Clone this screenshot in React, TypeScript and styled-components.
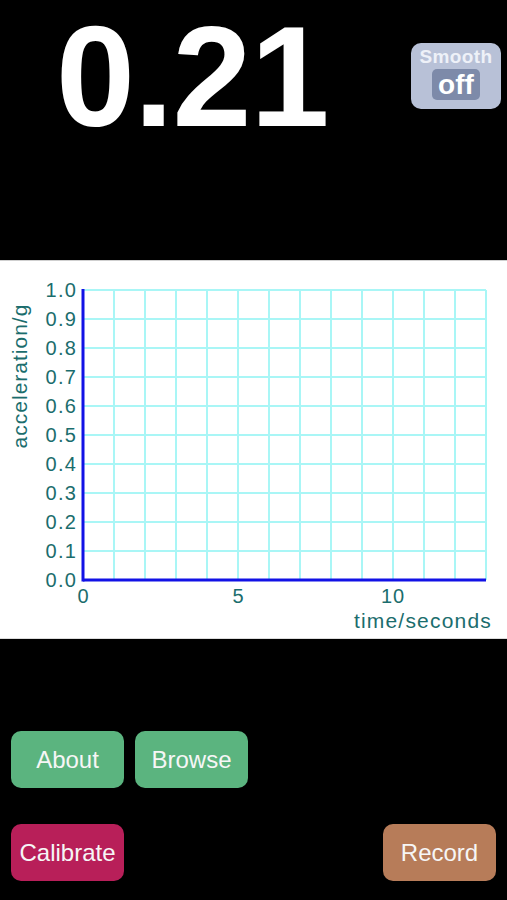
import styled, { createGlobalStyle } from "styled-components";

const GlobalStyle = createGlobalStyle`
  html, body {
    margin: 0;
    padding: 0;
    background: #000;
  }
  body {
    font-family: "Liberation Sans", Arial, sans-serif;
  }
`;

const Screen = styled.div`
  width: 507px;
  height: 900px;
  background: #000;
  display: flex;
  flex-direction: column;
  overflow: hidden;
`;

const Header = styled.div`
  height: 260px;
  display: flex;
  justify-content: space-between;
  align-items: flex-start;
  padding: 0 6px 0 56px;
  box-sizing: border-box;
`;

const Reading = styled.div`
  color: #fff;
  font-size: 142px;
  font-weight: 700;
  line-height: 154px;
  letter-spacing: -1px;
`;

const SmoothToggle = styled.button`
  margin-top: 43px;
  width: 90px;
  height: 66px;
  border: none;
  border-radius: 10px;
  background: #b8c1d7;
  display: flex;
  flex-direction: column;
  align-items: center;
  padding: 3px 0 0;
  box-sizing: border-box;
  font-family: "Liberation Sans", Arial, sans-serif;
  cursor: pointer;
`;

const SmoothLabel = styled.span`
  color: #eef1f8;
  font-size: 19px;
  font-weight: 700;
  line-height: 21px;
  letter-spacing: 0.4px;
`;

const StateBox = styled.span`
  margin-top: 2px;
  width: 48px;
  height: 31px;
  border-radius: 5px;
  background: #7d8aa9;
  color: #fff;
  font-size: 28px;
  font-weight: 700;
  line-height: 31px;
  text-align: center;
`;

const ChartPanel = styled.div`
  height: 379px;
  background: #fff;
  border-top: 1px solid #cfcfcf;
  border-bottom: 1px solid #dcdcdc;
  box-sizing: border-box;
`;

const Controls = styled.div`
  flex: 1;
  display: flex;
  flex-direction: column;
  gap: 36px;
  padding: 92px 11px 0;
`;

const ButtonRow = styled.div<{ $spread?: boolean }>`
  display: flex;
  gap: 11px;
  justify-content: ${(p) => (p.$spread ? "space-between" : "flex-start")};
`;

const ActionButton = styled.button<{ $tone: string }>`
  width: 113px;
  height: 57px;
  border: none;
  border-radius: 10px;
  background: ${(p) => p.$tone};
  color: #f6f6f6;
  font-family: "Liberation Sans", Arial, sans-serif;
  font-size: 24px;
  padding: 0;
  cursor: pointer;
`;

const TEAL = "#1b6d6d";
const GRID = "#a9f6f6";
const X0 = 83;
const X_STEP = 31;
const Y_TOP = 30;
const Y_STEP = 29;
const Y_AXIS = Y_TOP + Y_STEP * 10;
const X_END = X0 + X_STEP * 13;

const Chart = () => {
  const verticals = Array.from({ length: 13 }, (_, i) => X0 + X_STEP * (i + 1));
  const horizontals = Array.from({ length: 10 }, (_, j) => Y_TOP + Y_STEP * j);
  const yLabels = Array.from({ length: 11 }, (_, k) => ({
    text: (1 - k / 10).toFixed(1),
    y: Y_TOP + Y_STEP * k + 7,
  }));

  return (
    <svg width="507" height="377" viewBox="0 1 507 377">
      {verticals.map((x) => (
        <line key={"v" + x} x1={x} y1={Y_TOP} x2={x} y2={Y_AXIS} stroke={GRID} strokeWidth={2} />
      ))}
      {horizontals.map((y) => (
        <line key={"h" + y} x1={X0} y1={y} x2={X_END} y2={y} stroke={GRID} strokeWidth={2} />
      ))}
      <line x1={X0} y1={Y_TOP - 1} x2={X0} y2={Y_AXIS + 1.5} stroke="#1212e6" strokeWidth={3} />
      <line x1={X0} y1={Y_AXIS} x2={X_END} y2={Y_AXIS} stroke="#1212e6" strokeWidth={3} />

      <g fill={TEAL} fontFamily="'Liberation Sans', Arial, sans-serif" fontSize={20}>
        {yLabels.map((l) => (
          <text key={l.text} x={77} y={l.y} textAnchor="end" letterSpacing={1.2}>
            {l.text}
          </text>
        ))}
        <text x={X0} y={343} textAnchor="middle">0</text>
        <text x={X0 + X_STEP * 5} y={343} textAnchor="middle">5</text>
        <text x={X0 + X_STEP * 10} y={343} textAnchor="middle" letterSpacing={1}>10</text>
        <text x={492} y={368} textAnchor="end" fontSize={21} letterSpacing={1.2}>
          time/seconds
        </text>
        <text transform="translate(27 116) rotate(-90)" textAnchor="middle" fontSize={21} letterSpacing={1}>
          acceleration/g
        </text>
      </g>
    </svg>
  );
};

export default function App() {
  return (
    <>
      <GlobalStyle />
      <Screen>
        <Header>
          <Reading>0.21</Reading>
          <SmoothToggle>
            <SmoothLabel>Smooth</SmoothLabel>
            <StateBox>off</StateBox>
          </SmoothToggle>
        </Header>
        <ChartPanel>
          <Chart />
        </ChartPanel>
        <Controls>
          <ButtonRow>
            <ActionButton $tone="#5bb47f">About</ActionButton>
            <ActionButton $tone="#5bb47f">Browse</ActionButton>
          </ButtonRow>
          <ButtonRow $spread>
            <ActionButton $tone="#b81f59">Calibrate</ActionButton>
            <ActionButton $tone="#b77c59">Record</ActionButton>
          </ButtonRow>
        </Controls>
      </Screen>
    </>
  );
}
